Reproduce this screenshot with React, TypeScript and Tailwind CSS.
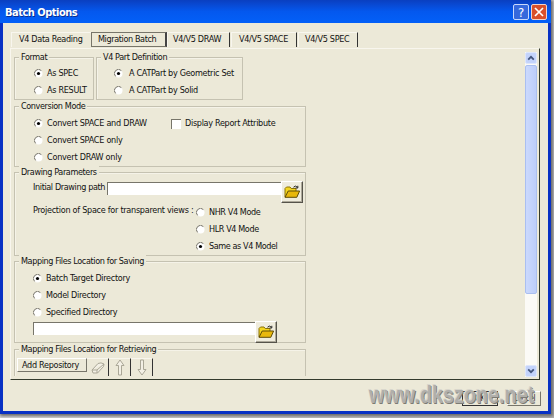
import type { ReactNode } from "react"

const Legend = ({ children, className = "" }: { children: ReactNode, className?: string }) => (
    <span className={`self-start ml-[4px] -mt-[7px] px-[2px] h-[13px] leading-[13px] tracking-[-0.38px] bg-[#ece9d8] ${className}`}>{children}</span>
)

const Group = ({ title, className = "", children }: { title: string, className?: string, children?: ReactNode }) => (
    <section className={`flex flex-col shrink-0 border border-[#c5c2b1] shadow-[inset_1px_1px_0_#f5f3e8] ${className}`}>
        <Legend>{title}</Legend>
        {children}
    </section>
)

const Radio = ({ label, checked = false, className = "gap-[4px]" }: { label: string, checked?: boolean, className?: string }) => (
    <label className={`flex items-center h-[17px] ${className}`}>
        <svg width="9" height="9" viewBox="0 0 9 9" className="shrink-0">
            <circle cx="4.5" cy="4.5" r="4" fill="#fff" />
            <path d="M1.6 7.4A4.1 4.1 0 0 1 7.4 1.6" fill="none" stroke="#77756a" strokeWidth="1" />
            {checked && <circle cx="4.5" cy="4.5" r="1.6" fill="#000" />}
        </svg>
        <span>{label}</span>
    </label>
)

const FolderButton = () => (
    <button className="flex items-center justify-center w-[22px] h-[22px] shrink-0 bg-[#efecdd] border border-t-white border-l-white border-r-[#55534a] border-b-[#55534a] shadow-[inset_-1px_-1px_0_#aca899]">
        <svg width="17" height="14" viewBox="0 0 17 14">
            <path d="M1 12V3.5L2.5 2H6l1.2 1.5H12V6" fill="#f3d51f" stroke="#8a7208" />
            <path d="M1 12.3L4.2 6H15.6L12.8 12.3Z" fill="#e8b80c" stroke="#5e4c06" />
            <path d="M9.5 2.2Q11.5 0 13.3 2.2M13.8 .8V3H11.6" fill="none" stroke="#222" />
        </svg>
    </button>
)

const TextBox = ({ className }: { className: string }) => (
    <input type="text" className={`h-[13px] shrink-0 bg-white border-t border-l border-[#77756a] outline-none ${className}`} />
)

const Tab = ({ label, className }: { label: string, className: string }) => (
    <div className={`flex items-center h-[15px] shrink-0 border-t border-l border-t-[#f8f6ee] border-l-[#f8f6ee] ${className}`}>{label}</div>
)

const ScrollArrow = ({ d }: { d: string }) => (
    <div className="flex items-center justify-center w-[12px] h-[12px] shrink-0 rounded-[2px] bg-[#c3d3fb] border border-[#dde6fb]">
        <svg width="8" height="6" viewBox="0 0 8 6"><path d={d} fill="none" stroke="#43557c" strokeWidth="1.8" /></svg>
    </div>
)

const TitleBar = () => (
    <header className="flex items-center h-[23px] shrink-0 pl-[5px] pr-[4px] pt-[1px] bg-linear-to-b from-[#0a3fc0] via-[#0458ee] to-[#0360f8]">
        <h1 className="grow text-white text-[11px] tracking-[-0.5px] font-bold pt-[2px] [text-shadow:1px_1px_0_#0a2f90]">Batch Options</h1>
        <button className="flex items-center justify-center w-[16px] h-[16px] mr-[2px] rounded-[2px] border border-[#c8d8fb] bg-[#3568dc] text-white text-[13px] leading-none">?</button>
        <button className="flex items-center justify-center w-[16px] h-[16px] rounded-[2px] border border-[#f3d2c8] bg-[#d9502b]">
            <svg width="10" height="10" viewBox="0 0 10 10"><path d="M1 1L9 9M9 1L1 9" stroke="#fff" strokeWidth="1.7" /></svg>
        </button>
    </header>
)

const ToolButton = ({ children }: { children: ReactNode }) => (
    <div className="flex items-center justify-center w-[22px] h-[18px] border-r border-r-[#333] border-t border-t-[#f8f6ee]">{children}</div>
)

export default function App() {
    return (
        <div className="w-[554px] h-[418px] overflow-hidden bg-linear-to-br from-[#fff] to-[#b0b0b0] font-['DejaVu_Sans_Condensed','DejaVu_Sans',sans-serif] [font-stretch:condensed] text-[9px] tracking-[-0.3px] whitespace-nowrap text-[#111]">
            <div className="flex flex-col w-[551px] h-[414px] bg-[#0831c4] shadow-[1px_1px_3px_1px_#666]">
                <TitleBar />
                <div className="flex flex-col grow mx-[3px] mb-[3px] bg-[#ece9d8] pl-[7px] pt-[9px]">
                    <nav className="flex h-[16px]">
                        <Tab label="V4 Data Reading" className="w-[80px] pl-[7px] ml-px" />
                        <Tab label="Migration Batch" className="w-[76px] pl-[6px] tracking-[-0.38px] border! border-[#77756a]! border-r-2! border-r-[#444]!" />
                        <Tab label="V4/V5 DRAW" className="w-[63px] pl-[5px] border-r border-r-[#333]" />
                        <Tab label="V4/V5 SPACE" className="w-[66px] pl-[7px] ml-px border-r border-r-[#333]" />
                        <Tab label="V4/V5 SPEC" className="w-[60px] pl-[6px] ml-px border-r border-r-[#333]" />
                    </nav>
                    <main className="flex justify-between w-[530px] h-[332px] overflow-hidden border-t border-l border-t-[#f8f6ee] border-l-[#f8f6ee] border-r border-r-[#333a2c] border-b border-b-[#333a2c]">
                        <div className="flex flex-col pl-[3px] pt-[8px]">
                            <div className="flex gap-[2px] shrink-0">
                                <Group title="Format" className="w-[80px] h-[43px]">
                                    <div className="pl-[19px] pt-px">
                                        <Radio label="As SPEC" checked />
                                        <Radio label="As RESULT" />
                                    </div>
                                </Group>
                                <Group title="V4 Part Definition" className="w-[147px] h-[43px]">
                                    <div className="pl-[17px] pt-px">
                                        <Radio label="A CATPart by Geometric Set" checked className="gap-[6px]" />
                                        <Radio label="A CATPart by Solid" className="gap-[6px]" />
                                    </div>
                                </Group>
                            </div>
                            <Group title="Conversion Mode" className="w-[292px] h-[61px] mt-[6px]">
                                <div className="flex pl-[19px] pt-[2px]">
                                    <div className="w-[137px] tracking-[-0.24px]">
                                        <Radio label="Convert SPACE and DRAW" checked />
                                        <Radio label="Convert SPACE only" />
                                        <Radio label="Convert DRAW only" />
                                    </div>
                                    <label className="flex items-center gap-[4px] h-[17px]">
                                        <span className="w-[10px] h-[10px] bg-white border-t border-l border-[#77756a]" />
                                        Display Report Attribute
                                    </label>
                                </div>
                            </Group>
                            <Group title="Drawing Parameters" className="w-[292px] h-[84px] mt-[5px]">
                                <div className="flex h-[23px] pl-[18px] pt-[2px]">
                                    <span className="w-[74px] leading-[13px] tracking-[-0.38px]">Initial Drawing path</span>
                                    <TextBox className="w-[174px] mt-px" />
                                    <FolderButton />
                                </div>
                                <div className="flex pl-[18px] pt-px">
                                    <span className="w-[163px] pt-px tracking-[-0.27px]">Projection of Space for transparent views :</span>
                                    <div className="pt-px tracking-[-0.4px]">
                                        <Radio label="NHR V4 Mode" />
                                        <Radio label="HLR V4 Mode" />
                                        <Radio label="Same as V4 Model" checked />
                                    </div>
                                </div>
                            </Group>
                            <Group title="Mapping Files Location for Saving" className="w-[292px] h-[82px] mt-[5px]">
                                <div className="pl-[18px] pt-[2px]">
                                    <Radio label="Batch Target Directory" checked />
                                    <Radio label="Model Directory" />
                                    <Radio label="Specified Directory" />
                                </div>
                                <div className="flex pl-[18px]">
                                    <TextBox className="w-[222px] mt-px" />
                                    <FolderButton />
                                </div>
                            </Group>
                            <Group title="Mapping Files Location for Retrieving" className="w-[292px] h-[27px] mt-[6px] border-b-0">
                                <div className="flex pl-[2px] pt-[2px]">
                                    <button className="w-[70px] h-[14px] pl-[4px] text-left leading-[11px] tracking-[-0.3px] border border-t-white border-l-white border-r-[#77756a] border-b-[#77756a]">Add Repository</button>
                                    <ToolButton>
                                        <svg width="14" height="12" viewBox="0 0 14 12"><path d="M1 8L7 1.5Q10 0 13 2L12.5 4.5L6.5 11H2Z M1 8H6L13 2M6 8V11" fill="#f3f0e5" stroke="#aaa797" /></svg>
                                    </ToolButton>
                                    <ToolButton>
                                        <svg width="10" height="17" viewBox="0 0 10 17"><path d="M5 1L9 6.5H6.5V16H3.5V6.5H1Z" fill="#f3f0e5" stroke="#aaa797" /></svg>
                                    </ToolButton>
                                    <ToolButton>
                                        <svg width="10" height="17" viewBox="0 0 10 17"><path d="M5 16L9 10.5H6.5V1H3.5V10.5H1Z" fill="#f3f0e5" stroke="#aaa797" /></svg>
                                    </ToolButton>
                                </div>
                            </Group>
                        </div>
                        <div className="flex flex-col w-[12px] h-[325px] mt-[3px] mr-[2px] bg-[#fbfaf6]">
                            <ScrollArrow d="M1.2 4.6L4 1.8L6.8 4.6" />
                            <div className="h-[229px] mt-px rounded-[2px] border border-[#aabff0] bg-linear-to-r from-[#cbd9fd] to-[#bccdf9]" />
                            <div className="grow" />
                            <ScrollArrow d="M1.2 1.4L4 4.2L6.8 1.4" />
                        </div>
                    </main>
                    <footer className="relative flex justify-end gap-[9px] pt-[11px] pr-[7px]">
                        <button className="w-[36px] h-[15px] text-[8px] leading-none border border-[#333]">OK</button>
                        <button className="w-[34px] h-[15px] text-[8px] leading-none border border-t-white border-l-white border-r-[#77756a] border-b-[#77756a]">Cancel</button>
                        <span className="absolute left-[359px] top-[3px] text-[23px] leading-[24px] font-bold tracking-normal text-[#b0afab] [text-shadow:-1px_-1px_0_#d8d6cc,1px_1px_0_#7c7b74] origin-left scale-x-[0.86] font-['Liberation_Sans_Narrow','Liberation_Sans',sans-serif]">www.dkszone.net</span>
                    </footer>
                </div>
            </div>
        </div>
    )
}
